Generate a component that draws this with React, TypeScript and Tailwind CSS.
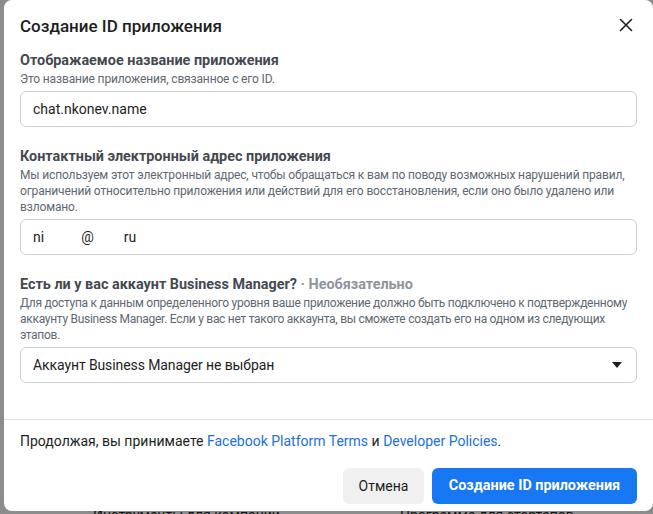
import React from "react";

const font = { fontFamily: "Roboto, 'Liberation Sans', Arial, sans-serif" };

function Field({ value }: { value: React.ReactNode }) {
  return (
    <div className="mt-1 flex h-[36px] items-center rounded-[6px] border border-[#ccd0d5] bg-white px-3 text-[14px] text-[#1c1e21]">
      {value}
    </div>
  );
}

export default function App() {
  return (
    <div className="relative h-[514px] w-[653px] overflow-hidden bg-[#8c8c8c]" style={font}>
      {/* background page peeking below the modal */}
      <div className="flex pt-[505px] text-[14px] leading-5 text-[#111]">
        <span className="ml-[93px]">Инструменты для компаний</span>
        <span className="ml-[120px]">Программа для стартапов</span>
      </div>

      {/* modal */}
      <div className="absolute left-[4px] top-0 flex h-[511px] w-[649px] flex-col rounded-[8px] bg-white">
        <div className="flex h-[50px] items-center justify-between pl-4 pr-[15px]">
          <h1 className="pt-[3px] text-[17px] font-medium text-[#1c1e21]">Создание ID приложения</h1>
          <button className="flex h-[24px] w-[24px] items-center justify-center text-[#1c1e21]">
            <svg width="14" height="14" viewBox="0 0 14 14" fill="none" stroke="currentColor" strokeWidth="1.6" strokeLinecap="round">
              <path d="M1.5 1.5 L12.5 12.5 M12.5 1.5 L1.5 12.5" />
            </svg>
          </button>
        </div>

        <div className="px-4 pb-[36px] pt-px">
          <div>
            <div className="text-[14.4px] font-bold leading-5 text-[#444950]">Отображаемое название приложения</div>
            <div className="text-[12px] leading-4 tracking-[-0.15px] text-[#606770]">Это название приложения, связанное с его ID.</div>
            <Field value="chat.nkonev.name" />
          </div>

          <div className="mt-5">
            <div className="text-[14.4px] font-bold leading-5 text-[#444950]">Контактный электронный адрес приложения</div>
            <div className="text-[12px] leading-4 tracking-[-0.15px] text-[#606770]">
              Мы используем этот электронный адрес, чтобы обращаться к вам по поводу возможных нарушений правил,
              ограничений относительно приложения или действий для его восстановления, если оно было удалено или
              взломано.
            </div>
            <Field
              value={
                <>
                  <span>ni</span>
                  <span className="ml-[37px]">@</span>
                  <span className="ml-[30px]">ru</span>
                </>
              }
            />
          </div>

          <div className="mt-5">
            <div className="text-[14.4px] font-bold leading-5 text-[#444950]">
              Есть ли у вас аккаунт Business Manager? <span className="text-[#8d949e]">· Необязательно</span>
            </div>
            <div className="text-[12px] leading-4 tracking-[-0.28px] text-[#606770]">
              Для доступа к данным определенного уровня ваше приложение должно быть подключено к подтвержденному
              аккаунту Business Manager. Если у вас нет такого аккаунта, вы сможете создать его на одном из следующих
              этапов.
            </div>
            <div className="mt-1 flex h-[36px] items-center justify-between rounded-[6px] border border-[#ccd0d5] bg-white pl-3 pr-[14px] text-[14px] text-[#1c1e21]">
              <span className="tracking-[-0.1px]">Аккаунт Business Manager не выбран</span>
              <svg width="10" height="6" viewBox="0 0 10 6">
                <path d="M0 0 H10 L5 6 Z" fill="#1c1e21" />
              </svg>
            </div>
          </div>
        </div>

        <div className="h-px bg-[#dadde1]" />

        <div className="px-4 pt-3">
          <div className="text-[14px] leading-[18px] text-[#1c1e21]">
            Продолжая, вы принимаете <span className="text-[#216fdb]">Facebook Platform Terms</span> и{" "}
            <span className="text-[#216fdb]">Developer Policies</span>.
          </div>
          <div className="mt-[18px] flex justify-end gap-2">
            <button className="h-[36px] w-[81px] rounded-[6px] bg-[#f0f0f0] text-[14px] text-[#1c1e21]">Отмена</button>
            <button className="h-[36px] w-[205px] rounded-[6px] bg-[#1877f2] text-[14.4px] font-bold text-white">
              Создание ID приложения
            </button>
          </div>
        </div>
      </div>
    </div>
  );
}
